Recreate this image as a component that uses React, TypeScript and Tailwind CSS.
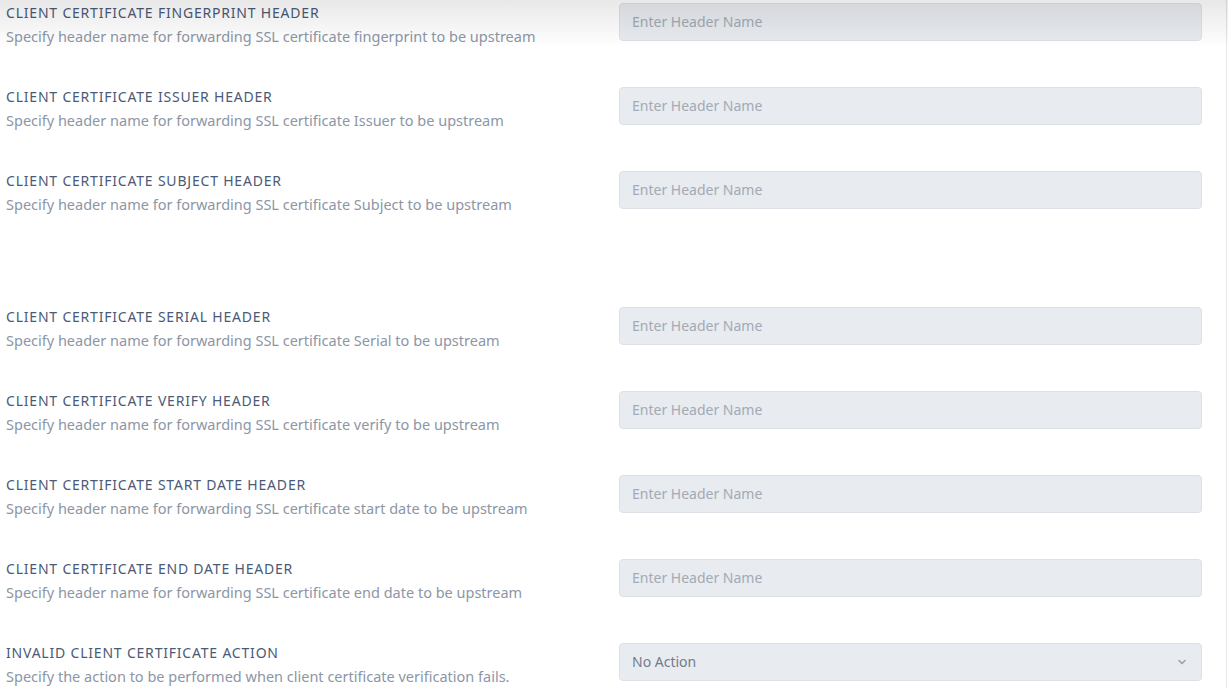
import React from 'react';

type Field = {
  title: string;
  hint: string;
  gapBefore?: boolean;
};

const fields: Field[] = [
  { title: 'Client Certificate Fingerprint Header', hint: 'Specify header name for forwarding SSL certificate fingerprint to be upstream' },
  { title: 'Client Certificate Issuer Header', hint: 'Specify header name for forwarding SSL certificate Issuer to be upstream' },
  { title: 'Client Certificate Subject Header', hint: 'Specify header name for forwarding SSL certificate Subject to be upstream' },
  { title: 'Client Certificate Serial Header', hint: 'Specify header name for forwarding SSL certificate Serial to be upstream', gapBefore: true },
  { title: 'Client Certificate Verify Header', hint: 'Specify header name for forwarding SSL certificate verify to be upstream' },
  { title: 'Client Certificate Start Date Header', hint: 'Specify header name for forwarding SSL certificate start date to be upstream' },
  { title: 'Client Certificate End Date Header', hint: 'Specify header name for forwarding SSL certificate end date to be upstream' },
];

function Label({ title, hint }: { title: string; hint: string }) {
  return (
    <div className="w-[619px] shrink-0 pl-[6px]">
      <div className="text-[14px] leading-6 uppercase text-[#4a5a77] tracking-[0.8px]">{title}</div>
      <div className="text-[14.5px] leading-[22px] text-[#8c96a6]">{hint}</div>
    </div>
  );
}

export default function App() {
  return (
    <div className="relative h-[688px] w-[1228px] overflow-hidden bg-white font-['Noto_Sans','Open_Sans',sans-serif]">
      <div className="w-[1227px] h-full border-r border-[#e4e6ea] pt-px">
        {fields.map((f) => (
          <div key={f.title} className={['flex h-[84px]', f.gapBefore ? 'mt-[52px]' : ''].join(' ')}>
            <Label title={f.title} hint={f.hint} />
            <input
              placeholder="Enter Header Name"
              className="mt-[2px] h-[38px] w-[583px] rounded-[4px] border border-[#dde1e6] bg-[#e8ebef] px-3 pb-px text-[14px] text-[#4b5a77] placeholder:text-[#a2aab6] outline-none"
            />
          </div>
        ))}

        {/* Action select */}
        <div className="flex h-[84px]">
          <Label
            title="Invalid Client Certificate Action"
            hint="Specify the action to be performed when client certificate verification fails."
          />
          <div className="mt-[2px] flex h-[38px] w-[583px] items-center justify-between rounded-[4px] border border-[#dde1e6] bg-[#e8ebef] pb-px pl-3 pr-[14px] text-[14px] text-[#737d8c]">
            <span>No Action</span>
            <svg width="10" height="10" viewBox="0 0 10 10" fill="none" aria-hidden="true">
              <path d="M2 3.5l3 3 3-3" stroke="#9aa2ae" strokeWidth="1.6" strokeLinecap="round" strokeLinejoin="round" />
            </svg>
          </div>
        </div>
      </div>

      {/* Shadow cast by the sticky bar above */}
      <div className="pointer-events-none absolute inset-x-0 top-0 h-[48px] bg-gradient-to-b from-black/[0.09] to-transparent" />
    </div>
  );
}
